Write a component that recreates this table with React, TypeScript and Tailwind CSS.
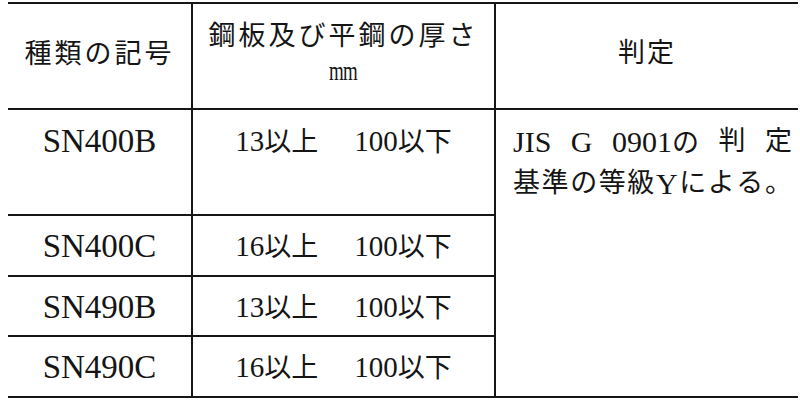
import React from "react";

const F = { fontFamily: '"Liberation Serif", "Noto Sans CJK JP", serif' };

function Range({ from }: { from: string }) {
  return (
    <div className="flex items-center gap-[36px] text-[29px] leading-none">
      <span>
        {from}
        <span className="text-[27px]">以上</span>
      </span>
      <span>
        100<span className="text-[27px]">以下</span>
      </span>
    </div>
  );
}

export default function App() {
  const line2 = ["基", "準", "の", "等", "級", "Y", "に", "よ", "る", "。"];
  return (
    <div className="w-[800px] h-[404px] bg-white text-[#151515] overflow-hidden pt-[2px] pl-[8px]" style={F}>
      <div className="w-[790px] border-t-2 border-b-2 border-[#161616] grid grid-cols-[185px_303px_302px] grid-rows-[106px_106px_61px_60px_59px]">
        {/* header */}
        <div className="border-r-2 border-b-2 border-[#161616] flex items-center justify-center pb-[4px]">
          <span className="text-[27px] tracking-[3px]">種類の記号</span>
        </div>
        <div className="border-r-2 border-b-2 border-[#161616] flex flex-col items-center pt-[14px]">
          <span className="text-[27px] tracking-[3px] leading-[36px]">鋼板及び平鋼の厚さ</span>
          <span className="text-[27px] leading-none mt-[4px] tracking-[-1px] scale-x-[0.7]">mm</span>
        </div>
        <div className="border-b-2 border-[#161616] flex items-center justify-center pb-[6px]">
          <span className="text-[27px] tracking-[2px]">判定</span>
        </div>

        {/* row 1 */}
        <div className="border-r-2 border-b-2 border-[#161616] flex items-start justify-center pt-[15px]">
          <span className="text-[33px] leading-none">SN400B</span>
        </div>
        <div className="border-r-2 border-b-2 border-[#161616] flex items-start justify-center pt-[17px]">
          <Range from="13" />
        </div>
        <div className="row-span-4 pl-[17px] pr-[6px] pt-[10px] text-[28px]">
          <div className="flex justify-between items-center h-[42px]">
            <span className="text-[30px]">JIS</span>
            <span className="text-[30px]">G</span>
            <span className="text-[30px]">
              0901<span className="text-[27px]">の</span>
            </span>
            <span className="text-[27px]">判</span>
            <span className="text-[27px]">定</span>
          </div>
          <div className="flex justify-between items-center h-[42px]">
            {line2.map((c, i) => (
              <span key={i} className={c === "Y" ? "text-[30px]" : "text-[27px]"}>
                {c}
              </span>
            ))}
          </div>
        </div>

        {/* row 2 */}
        <div className="border-r-2 border-b-2 border-[#161616] flex items-center justify-center pt-[2px]">
          <span className="text-[33px] leading-none">SN400C</span>
        </div>
        <div className="border-r-2 border-b-2 border-[#161616] flex items-center justify-center pt-[2px]">
          <Range from="16" />
        </div>

        {/* row 3 */}
        <div className="border-r-2 border-b-2 border-[#161616] flex items-center justify-center pt-[2px]">
          <span className="text-[33px] leading-none">SN490B</span>
        </div>
        <div className="border-r-2 border-b-2 border-[#161616] flex items-center justify-center pt-[2px]">
          <Range from="13" />
        </div>

        {/* row 4 */}
        <div className="border-r-2 border-[#161616] flex items-center justify-center pt-[2px]">
          <span className="text-[33px] leading-none">SN490C</span>
        </div>
        <div className="border-r-2 border-[#161616] flex items-center justify-center pt-[2px]">
          <Range from="16" />
        </div>
      </div>
    </div>
  );
}
